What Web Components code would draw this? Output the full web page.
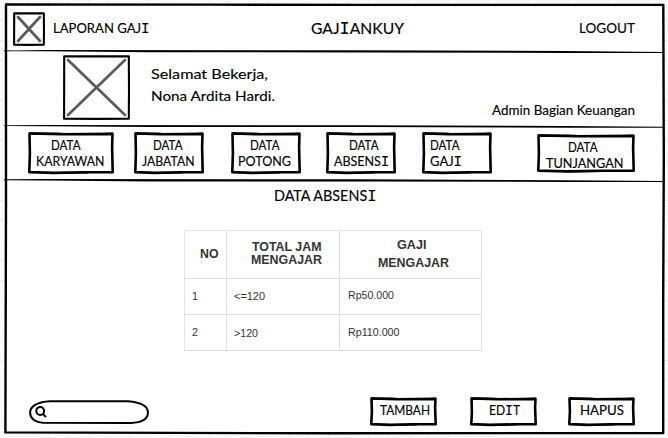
<!DOCTYPE html>
<html lang="id">
<head>
<meta charset="utf-8">
<title>Gajiankuy</title>
<style>
html,body{margin:0;height:438px;overflow:hidden}
body{font-family:Lato,"Liberation Sans",sans-serif;color:#000;
background:repeating-linear-gradient(90deg,transparent 0 8px,#f0f0f0 8px 9px,transparent 9px 20px),repeating-linear-gradient(#fafafa 0 20px,#eee 20px 21px,#fafafa 21px 40px,#eee 40px 41px,#fafafa 41px 60px,#eee 60px 61px,#fafafa 61px 80px,#eee 80px 81px,#fafafa 81px 100px);background-size:auto,100% 80px}
</style>
</head>
<body>
<payroll-page></payroll-page>
<script>
class Base extends HTMLElement {
  constructor(){ super(); this.attachShadow({mode:'open'}); }
  num(n,d){ return this.hasAttribute(n) ? parseFloat(this.getAttribute(n)) : d; }
}

/* One line of lettering scaled horizontally to a given width. Capital I gets serifs. */
customElements.define('sketch-text', class extends Base {
  connectedCallback(){
    const w=this.num('w',60), s=this.num('size',13.8), table=this.hasAttribute('plain');
    const txt=this.getAttribute('text').replace(/&/g,'&amp;').replace(/</g,'&lt;').replace(/>/g,'&gt;');
    const body=table?txt:txt.replace(/I/g,'<span class="i">I</span>');
    this.shadowRoot.innerHTML=`<style>
      :host{display:block;width:${w}px;height:16px;flex:none}
      .t{display:block;width:max-content;white-space:pre;font-size:${s}px;line-height:16px;transform-origin:0 0;-webkit-text-stroke:.15px #000}
      .i{font-family:"Liberation Mono",monospace;font-size:${s*1.08}px;line-height:0}
      :host([plain]) .t{font-family:"Liberation Sans",sans-serif;color:#333;-webkit-text-stroke:0}
      :host([bold]) .t{font-weight:bold}
    </style><span class="t">${body}</span>`;
    const t=this.shadowRoot.querySelector('.t');
    const n=t.getBoundingClientRect().width;
    if(n) t.style.transform=`scaleX(${w/n})`;
  }
});

/* Hand-drawn rectangle behind slotted content. */
customElements.define('sketch-box', class extends Base {
  connectedCallback(){
    const w=this.num('w',66), h=this.num('h',42);
    this.shadowRoot.innerHTML=`<style>
      :host{display:block;position:relative;box-sizing:border-box;width:${w}px;height:${h}px;flex:none}
      svg{position:absolute;inset:0;overflow:visible}
      .c{position:relative;height:100%}
    </style><svg width="${w}" height="${h}" fill="none" stroke="#000" stroke-linejoin="round">
      <path stroke-width="2.6" d="M1.5 1.5L${w*.4} 2.3L${w-1.5} 1.9L${w-1.9} ${h*.35}L${w-1.3} ${h-1.8}L${w*.65} ${h-1.7}L${w*.3} ${h-1.1}L1.3 ${h-1.9}L1.9 ${h*.5}Z"/>
      <path stroke-width="1" d="M1 .8L${w*.35} 1.1L${w*.6} 2.5L${w-1} 1.1M2.4 ${h*.3}L1.3 ${h-2}M${w*.3} ${h-.5}L${w*.7} ${h-1}"/>
    </svg><div class="c"><slot></slot></div>`;
  }
});

customElements.define('sketch-image', class extends Base {
  connectedCallback(){
    const w=this.num('w',32), h=this.num('h',34), p=this.num('inset',4.5);
    this.shadowRoot.innerHTML=`<style>:host{display:block;flex:none;width:${w}px;height:${h}px}svg{display:block}</style>
    <svg width="${w}" height="${h}" fill="none"><path stroke="#000" stroke-width="2.1" stroke-linejoin="round" d="M1.2 1.2L${w*.4} 1.4L${w-1.2} 1.2L${w-1} ${h*.5}L${w-1.2} ${h-1.3}L${w*.5} ${h-1.1}L1.1 ${h-1.2}Z"/>
    <path stroke="#5a5a5a" stroke-width="2.7" stroke-linecap="round" d="M${p} ${p}L${w-p} ${h-p}M${w-p} ${p}L${p} ${h-p}"/></svg>`;
  }
});

/* Button; each entry of "lines" is text, width, left offset. */
customElements.define('sketch-button', class extends Base {
  connectedCallback(){
    const lines=this.getAttribute('lines').split('|').map(l=>l.split(','));
    this.shadowRoot.innerHTML=`<style>
      :host{display:block;flex:none}
      .t{padding-top:${this.num('top',5)}px}
    </style><sketch-box w="${this.num('w',69)}" h="${this.num('h',42)}"><div class="t">${
      lines.map(([t,w,x])=>`<sketch-text style="margin-left:${x}px" text="${t}" w="${w}" size="13.8"></sketch-text>`).join('')
    }</div></sketch-box>`;
  }
});

customElements.define('sketch-search', class extends Base {
  connectedCallback(){
    this.shadowRoot.innerHTML=`<style>:host{display:block;width:120px;height:24px;flex:none}svg{display:block}</style>
    <svg width="120" height="24" fill="none" stroke="#000" stroke-width="2">
      <path d="M21 1.2L99 1.3C111 2.3 119 6 118.9 12.5C119 19 113 22.4 102 22.9L14 22.8C5 22.2 1 17.5 1.1 12.5C1.2 6 9 1.8 21 1.2Z"/>
      <circle cx="11.2" cy="11" r="3.9"/><path d="M13.9 14L17 17"/>
    </svg>`;
  }
});

customElements.define('wage-table', class extends Base {
  connectedCallback(){
    const c=(lines,top,cls='')=>`<div class="${cls}" style="padding-top:${top}px">${lines.map(([t,w,x,m=0])=>`<sketch-text plain ${cls?'bold':''} style="margin:${m}px 0 0 ${x}px" text="${t}" w="${w}" size="${cls?12.3:11.6}"></sketch-text>`).join('')}</div>`;
    this.shadowRoot.innerHTML=`<style>
      :host{display:grid;grid-template:48px 36px 36px / 42px 113px 142px;width:297px;border:1px solid #e4e4e4;border-width:1px 0 0 1px}
      div{box-sizing:border-box;border-right:1px solid #e0e0e0;border-bottom:1px solid #e0e0e0}
    </style>`
    +c([['NO',18.5,15]],15,'h')+c([['TOTAL JAM',69.5,25],['MENGAJAR',71,24,-3]],8,'h')+c([['GAJI',29.5,57],['MENGAJAR',71,38,2]],6,'h')
    +c([['1',6,7]],9)+c([['&lt;=120',31,7]],9)+c([['Rp50.000',46,7.5]],8)
    +c([['2',6,7]],9)+c([['&gt;120',24,7]],10)+c([['Rp110.000',51.5,7.5]],9);
  }
});

customElements.define('payroll-page', class extends Base {
  connectedCallback(){
    this.shadowRoot.innerHTML=`<style>
      :host{display:grid;grid-template-rows:52px 74px 55px 257px;width:668px;height:438px;position:relative}
      .frame{position:absolute;inset:0}
      header,section,nav,main{position:relative;box-sizing:border-box;display:flex;align-items:flex-start}
      header{padding:12px 33px 0 13px}
      section{padding:3px 33px 0 63px}
      nav{padding:6px 33px 0 28px}
      main{flex-direction:column;padding-top:6px}
      .lines{padding:11px 0 0 20.5px}
      .lines>*+*{margin-top:6px}
      wage-table{margin:27px 0 0 184px}
      footer{display:flex;align-items:flex-start;margin-top:46px;padding-left:29px}
    </style>
    <svg class="frame" width="668" height="438" fill="none" stroke="#000" stroke-linejoin="round">
      <path fill="#fff" stroke-width="2.4" d="M6 4.4L210 4.6L370 4.9L663.3 4.9L663.8 160L663.2 300L663.2 433L330 433.3L5.4 432.4L6 200Z"/>
      <g stroke="none" fill="#000">
        <path d="M4 50.3L15 50.4L45 50L360 50.2L565 50.9L664 52L664 53L570 52.9L360 52.4L150 52.3L45 51.3L4 51.2Z"/>
        <path d="M4 125.2L45 125L360 125.2L565 125.9L664 126.7L664 127.8L570 127.8L360 127.1L150 127.1L45 126.2L4 126.1Z"/>
        <path d="M4 179.2L45 179L360 179.3L565 180.2L664 181L664 182L570 181.9L360 181.4L150 181.4L45 180.4L4 180.2Z"/>
      </g>
    </svg>
    <header>
      <sketch-image w="32" h="34" inset="5"></sketch-image>
      <sketch-text style="margin:8px 0 0 7.5px" text="LAPORAN GAJI" w="96.5"></sketch-text>
      <sketch-text style="margin:8px 0 0 161.5px" text="GAJIANKUY" w="93" size="16.2"></sketch-text>
      <sketch-text style="margin:8px 0 0 auto" text="LOGOUT" w="56"></sketch-text>
    </header>
    <section>
      <sketch-image w="67" h="65" inset="5"></sketch-image>
      <div class="lines">
        <sketch-text text="Selamat Bekerja," w="117" size="14.2"></sketch-text>
        <sketch-text text="Nona Ardita Hardi." w="124" size="14.2"></sketch-text>
      </div>
      <sketch-text style="margin:47px 0 0 auto" text="Admin Bagian Keuangan" w="143" size="13.2"></sketch-text>
    </section>
    <nav>
      <sketch-button w="86" lines="DATA,29.5,23|KARYAWAN,68.5,7.5"></sketch-button>
      <sketch-button style="margin-left:20px" w="70" lines="DATA,29.5,19|JABATAN,52.5,8"></sketch-button>
      <sketch-button style="margin-left:27px" w="70" lines="DATA,29.5,18.5|POTONG,53,7"></sketch-button>
      <sketch-button style="margin-left:25px" w="70" lines="DATA,29.5,23|ABSENSI,55,8"></sketch-button>
      <sketch-button style="margin-left:26px" w="70" lines="DATA,29.5,7.5|GAJI,32,7.5"></sketch-button>
      <sketch-button style="margin:2px 0 0 45px" w="98" h="38.5" lines="DATA,29.5,31|TUNJANGAN,77.5,8.5"></sketch-button>
    </nav>
    <main>
      <sketch-text style="margin-left:273.5px" text="DATA ABSENSI" w="102.5" size="14.8"></sketch-text>
      <wage-table></wage-table>
      <footer>
        <sketch-search style="margin-top:3px"></sketch-search>
        <sketch-button style="margin-left:221px" w="67" h="29" top="5" lines="TAMBAH,50,10"></sketch-button>
        <sketch-button style="margin-left:33px" w="67" h="29" top="5" lines="EDIT,31,18.5"></sketch-button>
        <sketch-button style="margin-left:31px" w="67" h="29" top="5" lines="HAPUS,44,12"></sketch-button>
      </footer>
    </main>`;
  }
});
</script>
</body>
</html>
